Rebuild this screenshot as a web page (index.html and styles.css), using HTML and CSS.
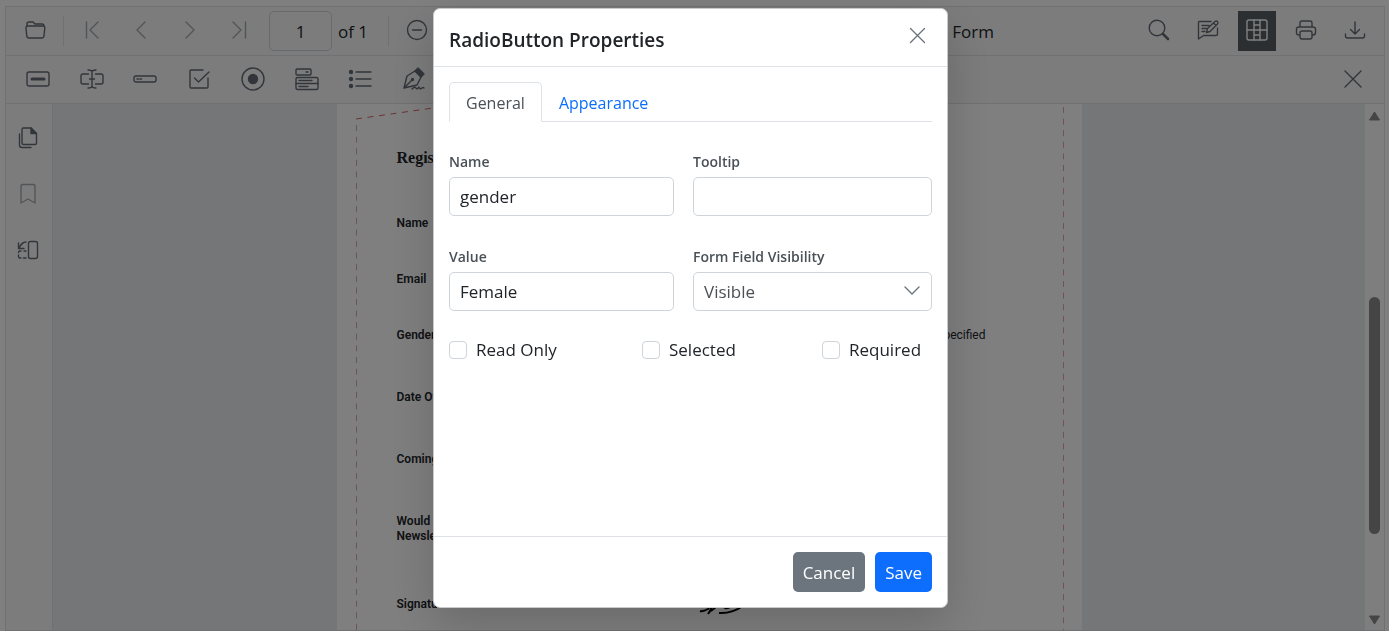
FILE: index.html
```
<!DOCTYPE html>
<html lang="en">
<head>
  <meta charset="UTF-8">
  <title>PDF Viewer - Form Designer</title>
  <link rel="stylesheet" href="styles.css">
</head>
<body>

<div class="viewer">
  <div class="toolbar">
    <button class="tool" aria-label="Open"><svg class="icon" viewBox="0 0 24 24"><path d="M4 8V6q0-2 2-2h4l2 2h7q2 0 2 2M5 8h15q2 0 1.800 2l-.8 8q-.2 2-2 2H6q-2 0-2.200-2L3 10q-.2-2 2-2z"/></svg></button>
    <span class="separator"></span>
    <button class="tool muted" aria-label="First page"><svg class="icon" viewBox="0 0 24 24"><path d="M6.500 4v16M18 4l-8 8 8 8"/></svg></button>
    <button class="tool muted" aria-label="Previous page"><svg class="icon" viewBox="0 0 24 24"><path d="M16 4l-8 8 8 8"/></svg></button>
    <button class="tool muted" aria-label="Next page"><svg class="icon" viewBox="0 0 24 24"><path d="M8 4l8 8-8 8"/></svg></button>
    <button class="tool muted" aria-label="Last page"><svg class="icon" viewBox="0 0 24 24"><path d="M6 4l8 8-8 8M18.500 4v16"/></svg></button>
    <label class="page-number"><input type="text" class="page-input" value="1"> of 1</label>
    <span class="separator"></span>
    <button class="tool" aria-label="Zoom out"><svg class="icon" viewBox="0 0 24 24"><circle cx="12" cy="12" r="9.500"/><path d="M7.500 12h9"/></svg></button>
    <button class="submit">Submit Form</button>
    <button class="tool" aria-label="Search"><svg class="icon" viewBox="0 0 24 24"><circle cx="10" cy="10" r="7.800"/><path d="M16 16l5 5" stroke-width="2.500"/></svg></button>
    <button class="tool" aria-label="Comment"><svg class="icon" viewBox="0 0 24 24"><path d="M15 3.500H3.500Q2.500 3.500 2.500 4.500V21l5-3.500H20q1.500 0 1.500-1.500V10M6 7.500h7M6 10.500h4.500M6 13.500h3M10.500 14.500l1-4 7.500-7q1.500-1 2.500 0t0 2.500l-7.500 7.500zM17.500 5l2.500 2.500"/></svg></button>
    <button class="tool selected" aria-label="Form designer"><svg class="icon" viewBox="0 0 24 24"><rect x="2" y="2" width="20" height="20" rx="2"/><path d="M9 2v20M15 2v20M2 12h20M9 7h6M9 17h6"/></svg></button>
    <button class="tool" aria-label="Print"><svg class="icon" viewBox="0 0 24 24"><path d="M6 9V5q0-2 2-2h8q2 0 2 2v4M6 17H5q-2.500 0-2.500-2.500V11q0-2 2.500-2h14q2.500 0 2.500 2v3.500q0 2.500-2.500 2.500h-1M6 15q0-2 2-2h8q2 0 2 2v4q0 2-2 2H8q-2 0-2-2z"/></svg></button>
    <button class="tool" aria-label="Download"><svg class="icon" viewBox="0 0 24 24"><path d="M12 4v12M7.500 11.500L12 16l4.500-4.500M2.500 16v2q0 2 2 2h15q2 0 2-2v-2"/></svg></button>
  </div>

  <div class="toolbar designer">
    <div class="field-tools">
      <button class="tool" aria-label="Button"><svg class="icon" viewBox="0 0 24 24"><rect x="1" y="5" width="22" height="14" rx="2"/><path d="M6 12h12" stroke-width="3"/></svg></button>
      <button class="tool" aria-label="Textbox"><svg class="icon" viewBox="0 0 24 24"><path d="M8.500 7H3Q1 7 1 9v6q0 2 2 2h5.500M15.500 7H21q2 0 2 2v6q0 2-2 2h-5.500M12 4v16M8 3q4 0 4 2 0-2 4-2M8 21q4 0 4-2 0 2 4 2M9.500 12h5"/></svg></button>
      <button class="tool" aria-label="Password"><svg class="icon" viewBox="0 0 24 24"><rect x="1" y="9" width="22" height="6" rx="2"/><path d="M4 12h1.500M7 12h1.500"/></svg></button>
      <button class="tool" aria-label="Checkbox"><svg class="icon" viewBox="0 0 24 24"><path d="M16 3H4q-1 0-1 1v16q0 1 1 1h16q1 0 1-1v-9M7.500 11l4 4L22 5"/></svg></button>
      <button class="tool" aria-label="Radio button"><svg class="icon" viewBox="0 0 24 24"><circle cx="12" cy="12" r="11"/><circle cx="12" cy="12" r="4.500" class="solid"/></svg></button>
      <button class="tool" aria-label="Dropdown"><svg class="icon" viewBox="0 0 24 24"><rect x="1" y="2" width="15" height="6" rx="1"/><rect x="1" y="10.500" width="22" height="12" rx="1.500"/><path d="M11 5h2M1 16.500h22M4 13.500h13M4 19.500h9"/></svg></button>
      <button class="tool" aria-label="List box"><svg class="icon" viewBox="0 0 24 24"><g class="solid"><circle cx="3" cy="5" r="1.500"/><circle cx="3" cy="12" r="1.500"/><circle cx="3" cy="19" r="1.500"/></g><path d="M8 5h15M8 12h15M8 19h15"/></svg></button>
      <button class="tool" aria-label="Signature"><svg class="icon" viewBox="0 0 24 24"><path d="M2 21L5 9l8-5 6 6-4 8zM2 21l8-8"/><circle cx="10.500" cy="12.500" r="1"/><path class="solid" d="M13 4l3-3 6 6-3 3z"/><path d="M10 22q3-3 4-1 1 2 3-1 1 3 3 1 1-1 2 0"/></svg></button>
    </div>
    <button class="tool close-designer" aria-label="Close"><svg class="icon" viewBox="0 0 24 24"><path d="M4 4l16 16M20 4L4 20"/></svg></button>
  </div>

  <div class="content">
    <div class="sidebar">
      <button class="tool" aria-label="Page thumbnails"><svg class="icon" viewBox="0 0 24 24"><path d="M7 2h8l5.500 5.500V17q0 1.500-1.500 1.500H7.500Q6 18.500 6 17V3.500Q6 2 7.500 2M3.500 8v11q0 2.500 2.500 2.500h9"/><path class="solid" d="M15 2v5.500h5.500z"/></svg></button>
      <button class="tool muted" aria-label="Bookmarks"><svg class="icon" viewBox="0 0 24 24"><path d="M5 21V4q0-1.500 1.500-1.500h11Q19 2.500 19 4v17l-7-4z"/></svg></button>
      <button class="tool" aria-label="Organize pages"><svg class="icon" viewBox="0 0 24 24"><rect x="12.500" y="3.500" width="9" height="17" rx="2"/><path d="M10 4q-4 0-7 6M2.500 5v5.500H8M10 13H8M5 13H4q-1.500 0-1.500 1.500M2.500 17v1.500q0 1.500 1.500 1.500h1M7.500 20H10"/></svg></button>
    </div>
    <div class="pages">
      <div class="page">
        <svg class="envelope" viewBox="0 0 745 526">
          <path class="flap" d="M19 15L124 0"/>
          <path d="M19.500 21v505M726.500 3v523"/>
        </svg>
        <h1 class="form-title">Register</h1>
        <p class="form-row short">Name</p>
        <p class="form-row short">Email</p>
        <p class="form-row">Gender <span class="option">Not Specified</span></p>
        <p class="form-row">Date Of Birth</p>
        <p class="form-row">Coming From</p>
        <p class="form-row tall">Would you like to<br>Newsletter</p>
        <p class="form-row">Signature</p>
        <svg class="signature" viewBox="0 0 60 40"><path d="M10 38q4-5 5-12l-5 7q-5 3-8 2M13 35q6-4 10-9 3 10 11 4 8-3 16-2M21 37q12 1 24-7M27 31q6-5 10-1"/></svg>
      </div>
    </div>
    <div class="scrollbar">
      <svg class="arrow" viewBox="0 0 12 10"><path d="M6 1l5 8H1z"/></svg>
      <div class="thumb"></div>
      <svg class="arrow" viewBox="0 0 12 10"><path d="M6 9l5-8H1z"/></svg>
    </div>
  </div>
</div>

<div class="overlay">
  <div class="dialog" role="dialog" aria-labelledby="dialogTitle">
    <div class="dialog-header">
      <h2 class="dialog-title" id="dialogTitle">RadioButton Properties</h2>
      <button class="dialog-close" aria-label="Close"><svg class="icon" viewBox="0 0 24 24"><path d="M4.500 4.500l14 14M18.500 4.500l-14 14"/></svg></button>
    </div>
    <div class="dialog-body">
      <div class="tabs">
        <button class="tab active">General</button>
        <button class="tab">Appearance</button>
      </div>
      <div class="fields">
        <div class="field">
          <label for="name">Name</label>
          <input type="text" id="name" class="control" value="gender">
        </div>
        <div class="field">
          <label for="tooltip">Tooltip</label>
          <input type="text" id="tooltip" class="control">
        </div>
        <div class="field">
          <label for="value">Value</label>
          <input type="text" id="value" class="control" value="Female">
        </div>
        <div class="field">
          <label for="visibility">Form Field Visibility</label>
          <div class="select-wrap">
            <select id="visibility" class="control">
              <option>Visible</option>
              <option>Hidden</option>
            </select>
            <svg class="icon caret" viewBox="0 0 24 24"><path d="M5 8l7 7 7-7"/></svg>
          </div>
        </div>
      </div>
      <div class="checks">
        <label class="check"><input type="checkbox"> Read Only</label>
        <label class="check"><input type="checkbox"> Selected</label>
        <label class="check"><input type="checkbox"> Required</label>
      </div>
    </div>
    <div class="dialog-footer">
      <button class="btn">Cancel</button>
      <button class="btn primary">Save</button>
    </div>
  </div>
</div>

</body>
</html>
```
FILE: styles.css
```
* {
  box-sizing: border-box;
}

body {
  margin: 0;
  font-family: "Open Sans", "Noto Sans", sans-serif;
  font-size: 17px;
  color: #212529;
  background: #fff;
}

button,
input,
select {
  font: inherit;
  color: inherit;
}

.viewer {
  height: 100vh;
  padding: 6px 4px 0 5px;
  display: flex;
  flex-direction: column;
}

.icon {
  display: block;
  width: 24px;
  height: 24px;
  fill: none;
  stroke: currentColor;
  stroke-width: 1.4;
  stroke-linecap: round;
  stroke-linejoin: round;
}

.solid {
  fill: currentColor;
}

/* toolbars */
.toolbar {
  display: flex;
  align-items: center;
  gap: 11px;
  height: 50px;
  padding: 0 10px;
  border: 1px solid #dee2e6;
  background: #f8f9fa;
}

.tool {
  display: flex;
  flex: none;
  align-items: center;
  justify-content: center;
  width: 38px;
  height: 40px;
  padding: 0 0 2px;
  border: 0;
  background: none;
  color: #646c74;
}

.muted {
  color: #a5abb1;
}

.selected {
  background: #565e64;
  color: #fff;
}

.separator {
  width: 1px;
  height: 30px;
  margin: 0 -2px;
  background: #dee2e6;
}

.page-number {
  display: flex;
  align-items: center;
  gap: 6px;
  width: 110px;
}

.page-input {
  width: 63px;
  height: 40px;
  border: 1px solid #ced4da;
  border-radius: 5px;
  background: none;
  text-align: center;
}

.submit {
  margin: 0 135px 0 auto;
  padding: 0;
  border: 0;
  background: none;
}

.designer {
  height: 48px;
  border-top: 0;
  padding-left: 13px;
}

.field-tools {
  display: flex;
  justify-content: space-between;
  width: 414px;
}

.close-designer {
  margin-left: auto;
  margin-right: 2px;
}

/* document area */
.content {
  flex: 1;
  display: flex;
  min-height: 0;
  border: 1px solid #dee2e6;
  border-top: 0;
}

.sidebar {
  display: flex;
  flex-direction: column;
  align-items: center;
  gap: 16px;
  width: 47px;
  padding: 15px 3px 0 0;
  border-right: 1px solid #dee2e6;
  background: #f8f9fa;
}

.pages {
  flex: 1;
  overflow: hidden;
  background: #e9ecef;
}

.page {
  position: relative;
  width: 745px;
  height: 100%;
  margin: 0 auto;
  padding: 44px 60px 0;
  overflow: hidden;
  background: #fff;
  font-family: Roboto, sans-serif;
}

.envelope {
  position: absolute;
  top: 0;
  left: 0;
  width: 745px;
  height: 526px;
  fill: none;
  stroke: #dca8a8;
  stroke-dasharray: 6 5.6;
}

.flap {
  stroke: #dc6464;
}

.form-title {
  height: 68px;
  margin: 0;
  font: bold 16px/20px "Liberation Serif", serif;
}

.form-row {
  height: 62px;
  margin: 0;
  font-size: 12px;
  line-height: 15px;
  font-weight: 600;
}

.form-row.short {
  height: 56px;
}

.form-row.tall {
  height: 83px;
}

.option {
  float: right;
  margin-right: 36px;
  font-weight: 400;
}

.signature {
  position: absolute;
  left: 361px;
  top: 472px;
  width: 60px;
  height: 40px;
  fill: none;
  stroke: #000;
  stroke-width: 2;
}

.scrollbar {
  display: flex;
  flex-direction: column;
  align-items: center;
  justify-content: space-between;
  width: 19px;
  padding: 7px 0 5px;
  background: #fcfcfc;
}

.arrow {
  width: 13px;
  height: 10px;
  fill: #8b8b8b;
  stroke: #8b8b8b;
  stroke-linejoin: round;
}

.thumb {
  width: 11px;
  height: 237px;
  margin-top: 95px;
  border-radius: 6px;
  background: #8b8b8b;
}

/* dialog */
.overlay {
  position: fixed;
  inset: 0;
  display: flex;
  align-items: flex-start;
  justify-content: center;
  padding: 8px 8px 0 0;
  background: rgba(0, 0, 0, 0.5);
}

.dialog {
  display: flex;
  flex-direction: column;
  width: 515px;
  min-height: 600px;
  border: 1px solid #c8cbce;
  border-radius: 7px;
  background: #fff;
  box-shadow: 0 16px 48px rgba(0, 0, 0, 0.175);
}

.dialog-header {
  display: flex;
  justify-content: space-between;
  height: 58px;
  padding: 15px;
  border-bottom: 1px solid #dee2e6;
}

.dialog-title {
  margin: 0;
  font-size: 19px;
  line-height: 32px;
  font-weight: 600;
}

.dialog-close {
  width: 28px;
  height: 24px;
  padding: 0 2px;
  border: 0;
  background: none;
  color: #6c757d;
}

.dialog-body {
  flex: 1;
  padding: 15px;
}

.tabs {
  display: flex;
  border-bottom: 1px solid #dee2e6;
}

.tab {
  height: 40px;
  margin-bottom: -1px;
  padding: 2px 16px 0;
  border: 1px solid transparent;
  border-radius: 5px 5px 0 0;
  background: none;
  font-size: 16px;
  color: #0d6efd;
}

.tab.active {
  border-color: #dee2e6;
  border-bottom-color: #fff;
  background: #fff;
  color: #495057;
}

.fields {
  display: grid;
  grid-template-columns: 225fr 239fr;
  gap: 29px 19px;
  margin-top: 28px;
}

.field > label {
  display: block;
  height: 27px;
  font-size: 14px;
  line-height: 24px;
  font-weight: 600;
  color: #495057;
}

.control {
  display: block;
  width: 100%;
  height: 39px;
  padding: 0 10px;
  border: 1px solid #ced4da;
  border-radius: 5px;
  background: none;
}

.select-wrap {
  position: relative;
}

.select-wrap .control {
  appearance: none;
  color: #495057;
}

.caret {
  position: absolute;
  right: 8px;
  top: 7px;
  color: #6c757d;
  pointer-events: none;
}

.checks {
  display: grid;
  grid-template-columns: 193fr 180fr 110fr;
  margin-top: 27px;
}

.check {
  display: flex;
  align-items: center;
  gap: 9px;
  white-space: nowrap;
}

.check input {
  appearance: none;
  width: 18px;
  height: 18px;
  margin: 0;
  border: 1px solid #ced4da;
  border-radius: 4px;
}

.dialog-footer {
  display: flex;
  justify-content: flex-end;
  gap: 10px;
  padding: 15px;
  border-top: 1px solid #dee2e6;
}

.btn {
  height: 40px;
  padding: 0 10px;
  border: 0;
  border-radius: 5px;
  background: #6c757d;
  color: #fff;
}

.btn.primary {
  background: #0d6efd;
}
```
